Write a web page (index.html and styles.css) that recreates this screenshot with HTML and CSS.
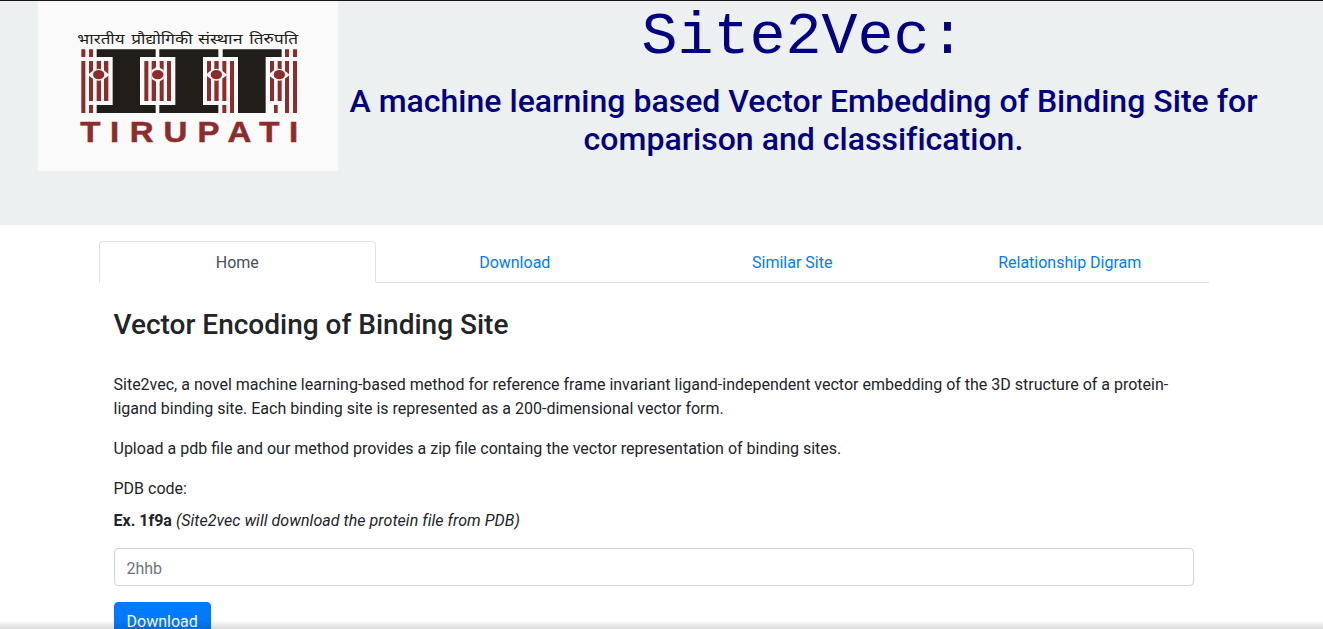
FILE: index.html
```html
<!DOCTYPE html>
<html lang="en">
<head>
<meta charset="utf-8">
<title>Site2Vec</title>
<link rel="stylesheet" href="styles.css">
</head>
<body>
<header class="banner">
  <svg class="logo" viewBox="24 3 900 510" role="img" aria-label="IIT Tirupati">
    <rect x="24" y="3" width="900" height="510" fill="#fafafa"/>
    <g class="logo-hindi">
      <text x="142" y="131" textLength="142" lengthAdjust="spacingAndGlyphs">भारतीय</text>
      <text x="304" y="131" textLength="184" lengthAdjust="spacingAndGlyphs">प्रौद्योगिकी</text>
      <text x="504" y="131" textLength="134" lengthAdjust="spacingAndGlyphs">संस्थान</text>
      <text x="658" y="131" textLength="146" lengthAdjust="spacingAndGlyphs">तिरुपति</text>
    </g>
    <g fill="#211e19">
      <path d="M200 148H377V171H330V315H377V339H200V315H248V171H200z"/>
      <path d="M388 148H565V171H519V315H565V339H388V315H436V171H388z"/>
      <path d="M578 148H755V171H707V339H624V171H578z"/>
    </g>
    <g fill="#8c2c2c">
      <path d="M154 148h12v23h-12zM177 148h12v23h-12zM154 183h12v156h-12zM177 183h12v120h-12zM200 183h13v120h-13zM222 183h13v120h-13zM177 315h12v24h-12z"/>
      <path d="M343 183h12v120h-12zM365 183h13v120h-13zM389 183h12v120h-12zM411 183h12v120h-12z"/>
      <path d="M531 183h12v120h-12zM553 183h13v120h-13zM577 183h12v120h-12zM600 183h12v156h-12zM577 315h12v24h-12z"/>
      <path d="M720 183h12v120h-12zM743 183h12v120h-12zM765 148h12v23h-12zM789 148h12v23h-12zM765 183h12v156h-12zM789 183h12v156h-12zM732 315h11v24h-11z"/>
    </g>
    <g fill="#fafafa">
      <path id="eye" d="M174 224Q190 208 206 206Q222 208 238 224Q222 240 206 242Q190 240 174 224z"/>
      <path d="M383 196Q389 206 401 210V237Q389 241 383 252Q377 241 365 237V210Q377 206 383 196z"/>
      <use href="#eye" x="353"/>
      <use href="#eye" x="541"/>
    </g>
    <g fill="#8c2c2c">
      <ellipse cx="206" cy="224" rx="17" ry="14"/>
      <ellipse cx="383" cy="224" rx="17" ry="14"/>
      <ellipse cx="559" cy="224" rx="17" ry="14"/>
      <ellipse cx="748" cy="224" rx="17" ry="14"/>
    </g>
    <text class="logo-name" transform="scale(1.15 1)" x="131 209 260 348 437 515 598 676" y="425">TIRUPATI</text>
  </svg>
  <div class="headline">
    <h1 class="title">Site2Vec:</h1>
    <h2 class="subtitle">A machine learning based Vector Embedding of Binding Site for comparison and classification.</h2>
  </div>
</header>
<main class="container">
  <nav class="tabs">
    <a class="tab tab-active">Home</a>
    <a class="tab">Download</a>
    <a class="tab">Similar Site</a>
    <a class="tab">Relationship Digram</a>
  </nav>
  <section class="panel">
    <h3 class="heading">Vector Encoding of Binding Site</h3>
    <p class="text">Site2vec, a novel machine learning-based method for reference frame invariant ligand-independent vector embedding of the 3D structure of a protein-ligand binding site. Each binding site is represented as a 200-dimensional vector form.</p>
    <p class="text">Upload a pdb file and our method provides a zip file containg the vector representation of binding sites.</p>
    <label class="label" for="pdb">PDB code:</label>
    <p class="text example"><b>Ex. 1f9a</b> <i class="hint">(Site2vec will download the protein file from PDB)</i></p>
    <input class="field" id="pdb" type="text" placeholder="2hhb">
    <button class="button" type="button">Download</button>
  </section>
</main>
<div class="bottom-shade"></div>
</body>
</html>
```
FILE: styles.css
```css
* { box-sizing: border-box; }
html { height: 100%; overflow: hidden; }
body {
  height: 100%;
  margin: 0;
  overflow: hidden;
  background: #fff;
  color: #212529;
  font: 400 16px/24px Roboto, sans-serif;
}
.banner {
  display: flex;
  align-items: flex-start;
  height: 225px;
  padding-left: 38px;
  border-top: 1px solid #17141c;
  background: #ecf0f1;
  color: #000080;
}
.logo { flex: none; width: 300px; height: 170px; }
.logo-hindi { font: 400 44px "Noto Sans", "Noto Sans Devanagari", sans-serif; fill: #211e19; }
.logo-name { font: 700 86px "Liberation Sans", sans-serif; fill: #8c2c2c; stroke: #8c2c2c; stroke-width: 1.5px; }
.headline { width: 931px; text-align: center; }
.title { margin: 0 0 9px; font: 400 60px/72px "Liberation Mono", monospace; }
.subtitle { margin: 0; font-size: 32px; font-weight: 500; line-height: 38.4px; letter-spacing: .02px; }
.container { width: 1110px; margin: 16px 0 0 98.5px; }
.tabs { display: flex; height: 42px; border-bottom: 1px solid #dee2e6; }
.tab {
  flex: 1;
  height: 42px;
  padding: 9px 16px 7px;
  border: 1px solid transparent;
  border-radius: 4px 4px 0 0;
  color: #007bff;
  text-align: center;
}
.tab-active {
  border-color: #dee2e6 #dee2e6 #fff;
  background: #fff;
  color: #495057;
}
.panel { padding: 25px 15px 0; }
.heading { margin: 0 0 31px; font-size: 28px; font-weight: 500; line-height: 34px; }
.text { margin: 0 0 16px; }
.example { margin-bottom: 15px; }
.hint { letter-spacing: .05px; }
.label { display: block; margin-bottom: 8px; }
.field {
  display: block;
  width: 100%;
  height: 38px;
  margin: 0 0 16px;
  padding: 7px 12px 5px;
  border: 1px solid #ced4da;
  border-radius: 4px;
  background: #fff;
  font: inherit;
}
.field::placeholder { color: #6c757d; opacity: 1; }
.button {
  display: block;
  height: 38px;
  padding: 7px 12px 5px;
  border: 1px solid #007bff;
  border-radius: 4px;
  background: #007bff;
  color: #fff;
  font: inherit;
}
.bottom-shade {
  position: fixed;
  right: 0;
  bottom: 0;
  left: 0;
  height: 9px;
  background: linear-gradient(rgba(0, 0, 0, 0), rgba(0, 0, 0, .14));
}
```
